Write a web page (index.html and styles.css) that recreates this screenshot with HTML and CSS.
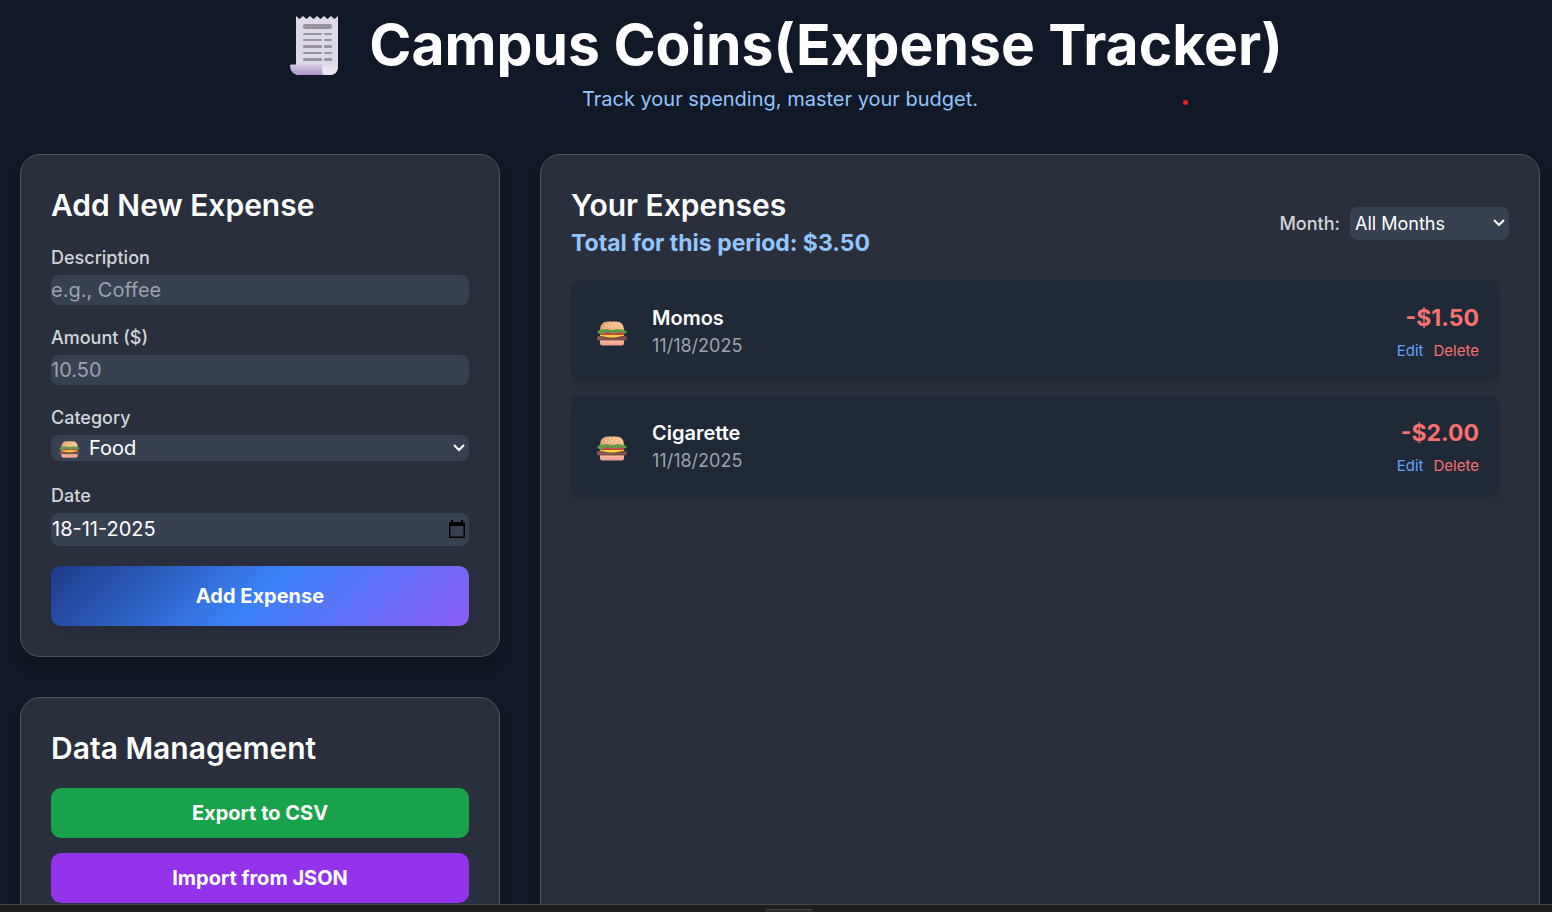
FILE: index.html
```html
<!DOCTYPE html>
<html lang="en">

<head>
    <meta charset="UTF-8">
    <meta name="viewport" content="width=device-width, initial-scale=1.0">
    <title>Campus Coins (Expense Tracker)</title>
    <link rel="stylesheet" href="styles.css">
</head>

<body>
    <!-- Shared burger icon -->
    <svg class="sprite" aria-hidden="true">
        <defs>
            <linearGradient id="bun" x1="0" y1="0" x2="1" y2="0">
                <stop offset="0" stop-color="#e0a068" />
                <stop offset="1" stop-color="#fdc994" />
            </linearGradient>
            <linearGradient id="bunBottom" x1="0" y1="0" x2="0" y2="1">
                <stop offset="0" stop-color="#fbc5a0" />
                <stop offset="1" stop-color="#ee9a90" />
            </linearGradient>
            <linearGradient id="patty" x1="0" y1="0" x2="1" y2="0">
                <stop offset="0" stop-color="#8d5a52" />
                <stop offset="1" stop-color="#7a4c44" />
            </linearGradient>
        </defs>
        <symbol id="burger" viewBox="0 0 30 25">
            <path d="M3 18h24v4q0 2.500-2.500 2.500h-19Q3 24.500 3 22z" fill="url(#bunBottom)" />
            <rect x="3" y="13" width="24" height="4" fill="#f9c62b" />
            <path d="M3 11h24v3H3z" fill="#c8453f" />
            <path d="M5 12.500q3-2.500 6 0zM17 12.500q4-3.500 8 0z" fill="#f0307a" />
            <rect x="0" y="15" width="30" height="4.500" rx="2" fill="url(#patty)" />
            <path d="M4 14h22l-3 1.500q-8 2-16 0z" fill="#fbd03a" />
            <path d="M3 9Q3 .5 11 .5h8q8 0 8 8.500z" fill="url(#bun)" />
            <path d="M0 11q2-3 6-2.500 3-1 6 0 3 1 6 0 3-1 6 0 4-.5 6 2.500-1 2-4 1.500-3-2-6-.5-3 1.500-7 0-3-1.500-6 .5-5 2-7-1.500z" fill="#5f9b48" />
            <g fill="#fff3df">
                <circle cx="9" cy="4.500" r=".7" />
                <circle cx="13" cy="2.500" r=".7" />
                <circle cx="17" cy="2.500" r=".7" />
                <circle cx="12" cy="6" r=".7" />
                <circle cx="15" cy="5" r=".7" />
                <circle cx="19" cy="5" r=".7" />
                <circle cx="8" cy="7" r=".6" />
            </g>
        </symbol>
    </svg>

    <main class="app">
        <header class="header">
            <h1>
                <svg class="receipt" viewBox="0 0 76 60" aria-hidden="true">
                    <defs>
                        <linearGradient id="curl" x1="0" y1="0" x2="0" y2="1">
                            <stop offset="0" stop-color="#d5cae4" />
                            <stop offset="1" stop-color="#ab92cc" />
                        </linearGradient>
                        <linearGradient id="fold" x1="0" y1="1" x2="1" y2="0">
                            <stop offset="0" stop-color="#f3edf8" />
                            <stop offset="1" stop-color="#ded9e6" />
                        </linearGradient>
                    </defs>
                    <path d="M19 1l3.500 3 3.500-3 3.500 3 3.500-3 3.500 3 3.500-3 3.500 3 3.500-3 3.500 3 3.500-3 3.500 3 3.500-3V51q0 9-9 9H19z" fill="#ded9e6" />
                    <path d="M14 49.500h31.500V60H23q-9.500 0-10-9 0-1.500 1-1.500z" fill="url(#curl)" />
                    <path d="M45 49.500q0 3 4 3 5-3 12-5V51q0 9-9 9-7 0-7-8z" fill="url(#fold)" />
                    <g fill="#98939f">
                        <rect x="26" y="9" width="29" height="5" rx="2" />
                        <rect x="26" y="18" width="19" height="2" rx="1" />
                        <rect x="47" y="18" width="8" height="2" rx="1" />
                        <rect x="26" y="24" width="19" height="2" rx="1" />
                        <rect x="47" y="24" width="8" height="2" rx="1" />
                        <rect x="26" y="30" width="19" height="3" rx="1" />
                        <rect x="47" y="30" width="8" height="3" rx="1" />
                        <rect x="26" y="37" width="19" height="2" rx="1" />
                        <rect x="47" y="37" width="8" height="2" rx="1" />
                        <rect x="26" y="43" width="19" height="3" rx="1" />
                        <rect x="47" y="43" width="8" height="3" rx="1" />
                    </g>
                </svg>
                Campus Coins(Expense Tracker)
            </h1>
            <p class="tagline">Track your spending, master your budget.</p>
            <span class="dot"></span>
        </header>

        <div class="layout">
            <div class="sidebar">
                <section class="card">
                    <h2>Add New Expense</h2>
                    <form id="expenseForm">
                        <div class="field">
                            <label for="description">Description</label>
                            <input type="text" id="description" placeholder="e.g., Coffee">
                        </div>
                        <div class="field">
                            <label for="amount">Amount ($)</label>
                            <input type="number" id="amount" placeholder="10.50" step="0.01">
                        </div>
                        <div class="field">
                            <label for="category">Category</label>
                            <div class="category">
                                <svg class="category-icon" aria-hidden="true"><use href="#burger" /></svg>
                                <select id="category">
                                    <option>Food</option>
                                </select>
                            </div>
                        </div>
                        <div class="field">
                            <label for="date">Date</label>
                            <div class="date">
                                <input type="text" id="date" value="18-11-2025">
                                <button type="button" class="calendar" aria-label="Open calendar">
                                    <svg viewBox="0 0 16 18" aria-hidden="true">
                                        <path d="M2 0h2v2h8V0h2v2h.5Q16 2 16 3.500v13q0 1.500-1.500 1.500h-13Q0 18 0 16.500v-13Q0 2 1.500 2H2zM1.500 6v10.500h13V6z" fill="#000" fill-rule="evenodd" />
                                    </svg>
                                </button>
                            </div>
                        </div>
                        <button type="submit" class="btn btn-add">Add Expense</button>
                    </form>
                </section>

                <section class="card">
                    <h2>Data Management</h2>
                    <div class="actions">
                        <button type="button" class="btn btn-export">Export to CSV</button>
                        <button type="button" class="btn btn-import">Import from JSON</button>
                    </div>
                </section>
            </div>

            <section class="card expenses">
                <div class="expenses-header">
                    <div>
                        <h2>Your Expenses</h2>
                        <p class="total">Total for this period: $3.50</p>
                    </div>
                    <div class="filter">
                        <label for="month">Month:</label>
                        <select id="month">
                            <option>All Months</option>
                        </select>
                    </div>
                </div>

                <ul class="list">
                    <li class="item">
                        <svg class="item-icon" aria-hidden="true"><use href="#burger" /></svg>
                        <div class="item-info">
                            <p class="item-name">Momos</p>
                            <p class="item-date">11/18/2025</p>
                        </div>
                        <div class="item-side">
                            <p class="item-amount">-$1.50</p>
                            <div class="item-actions">
                                <button type="button" class="edit">Edit</button>
                                <button type="button" class="delete">Delete</button>
                            </div>
                        </div>
                    </li>
                    <li class="item">
                        <svg class="item-icon" aria-hidden="true"><use href="#burger" /></svg>
                        <div class="item-info">
                            <p class="item-name">Cigarette</p>
                            <p class="item-date">11/18/2025</p>
                        </div>
                        <div class="item-side">
                            <p class="item-amount">-$2.00</p>
                            <div class="item-actions">
                                <button type="button" class="edit">Edit</button>
                                <button type="button" class="delete">Delete</button>
                            </div>
                        </div>
                    </li>
                </ul>
            </section>
        </div>
    </main>

    <footer class="drawer"><span class="grip"></span></footer>
</body>

</html>
```
FILE: styles.css
```css
/* Basic Reset */
* {
    margin: 0;
    padding: 0;
    box-sizing: border-box;
}

body {
    display: flex;
    flex-direction: column;
    height: 100vh;
    overflow: hidden;
    font-family: Inter, sans-serif;
    font-size: 20px;
    background-color: #111827;
    color: #fff;
}

button,
input,
select {
    font: inherit;
    color: inherit;
    border: none;
}

button {
    cursor: pointer;
}

.sprite {
    position: absolute;
    width: 0;
    height: 0;
}

.app {
    flex: 1;
    min-height: 0;
    overflow: hidden;
    display: flex;
    flex-direction: column;
    padding: 15px 12px 0 20px;
}

/* Header */
.header {
    position: relative;
    text-align: center;
    margin-bottom: 40px;
}

h1 {
    display: flex;
    justify-content: center;
    align-items: center;
    gap: 16px;
    font-size: 57px;
    line-height: 60px;
    font-weight: 700;
}

.receipt {
    width: 76px;
    height: 60px;
}

.tagline {
    margin-top: 10px;
    line-height: 29px;
    color: #93c5fd;
}

.dot {
    position: absolute;
    right: 352px;
    bottom: 9px;
    width: 5px;
    height: 5px;
    border-radius: 50%;
    background-color: #ee1c1c;
}

/* Layout */
.layout {
    flex: 1;
    display: grid;
    grid-template-columns: repeat(3, 1fr);
    gap: 40px;
}

.sidebar {
    display: flex;
    flex-direction: column;
    gap: 40px;
}

.card {
    padding: 30px;
    background-color: #292f3c;
    border: 1px solid #50555f;
    border-radius: 20px;
    box-shadow: 0 10px 15px rgba(0, 0, 0, 0.15);
}

h2 {
    font-size: 30px;
    line-height: 40px;
    font-weight: 600;
}

.sidebar h2 {
    margin-bottom: 20px;
}

/* Form */
.field {
    margin-bottom: 20px;
}

label {
    display: block;
    font-size: 18px;
    line-height: 25px;
    font-weight: 500;
    color: #d1d5db;
}

.field label {
    margin-bottom: 5px;
}

input,
select {
    display: block;
    width: 100%;
    background-color: #384152;
    border-radius: 8px;
}

input {
    height: 30px;
}

input::placeholder {
    color: #9ca3af;
}

input[type="number"] {
    appearance: textfield;
}

select {
    appearance: none;
    padding-left: 5px;
    background-image: url("data:image/svg+xml,%3Csvg xmlns='http://www.w3.org/2000/svg' viewBox='0 0 12 8'%3E%3Cpath d='M1 1l5 5 5-5' fill='none' stroke='white' stroke-width='2'/%3E%3C/svg%3E");
    background-repeat: no-repeat;
    background-position: right 4px center;
    background-size: 12px 8px;
}

.category {
    position: relative;
    height: 28px;
}

.category select {
    height: 26px;
    padding-left: 38px;
}

.category-icon {
    position: absolute;
    left: 8px;
    top: 6px;
    width: 21px;
    height: 17px;
}

.date {
    position: relative;
}

.date input {
    height: 33px;
    padding: 0 0 2px 1px;
}

.calendar {
    position: absolute;
    right: 4px;
    top: 7px;
    width: 16px;
    height: 18px;
    background: none;
}

.calendar svg {
    display: block;
}

/* Buttons */
.btn {
    display: block;
    width: 100%;
    height: 50px;
    border-radius: 10px;
    font-weight: 700;
}

.btn-add {
    height: 60px;
    background: linear-gradient(135deg, #1e3a8a, #3b82f6 50%, #8b5cf6);
    box-shadow: 0 4px 6px rgba(0, 0, 0, 0.1);
}

.actions {
    display: flex;
    flex-direction: column;
    gap: 15px;
}

.btn-export {
    background-color: #18a34a;
}

.btn-import {
    background-color: #9333ea;
}

/* Expenses */
.expenses {
    grid-column: span 2;
}

.expenses-header {
    display: flex;
    justify-content: space-between;
    align-items: center;
    margin-bottom: 19px;
}

.total {
    font-size: 23px;
    line-height: 36px;
    font-weight: 700;
    color: #93c5fd;
}

.filter {
    display: flex;
    align-items: center;
    gap: 10px;
}

.filter select {
    width: 159px;
    height: 33px;
    font-size: 18px;
}

.list {
    display: flex;
    flex-direction: column;
    gap: 14px;
    padding-right: 10px;
    list-style: none;
}

.item {
    display: flex;
    align-items: center;
    padding: 20px;
    background-color: #1f2937;
    border-radius: 10px;
    box-shadow: 0 4px 6px rgba(0, 0, 0, 0.1);
}

.item-icon {
    width: 30px;
    height: 25px;
    margin: 5px 25px 0 6px;
}

.item-info {
    flex: 1;
}

.item-name {
    line-height: 30px;
    font-weight: 600;
}

.item-date {
    font-size: 18px;
    line-height: 25px;
    color: #9ca3af;
}

.item-side {
    text-align: right;
}

.item-amount {
    font-size: 23px;
    line-height: 36px;
    font-weight: 700;
    color: #f87171;
}

.item-actions {
    display: flex;
    justify-content: flex-end;
    gap: 10px;
    margin-top: 5px;
}

.item-actions button {
    background: none;
    font-size: 15px;
    line-height: 20px;
}

.edit {
    color: #60a5fa;
}

.delete {
    color: #f87171;
}

/* Bottom drawer */
.drawer {
    display: flex;
    justify-content: center;
    align-items: flex-end;
    height: 8px;
    overflow: hidden;
    background-color: #1c1c1c;
    border-top: 1px solid #47484a;
}

.grip {
    width: 48px;
    height: 3px;
    margin-left: 26px;
    background-color: #2b2b2b;
    border-top: 1px solid #444;
    border-radius: 4px 4px 0 0;
}
```
